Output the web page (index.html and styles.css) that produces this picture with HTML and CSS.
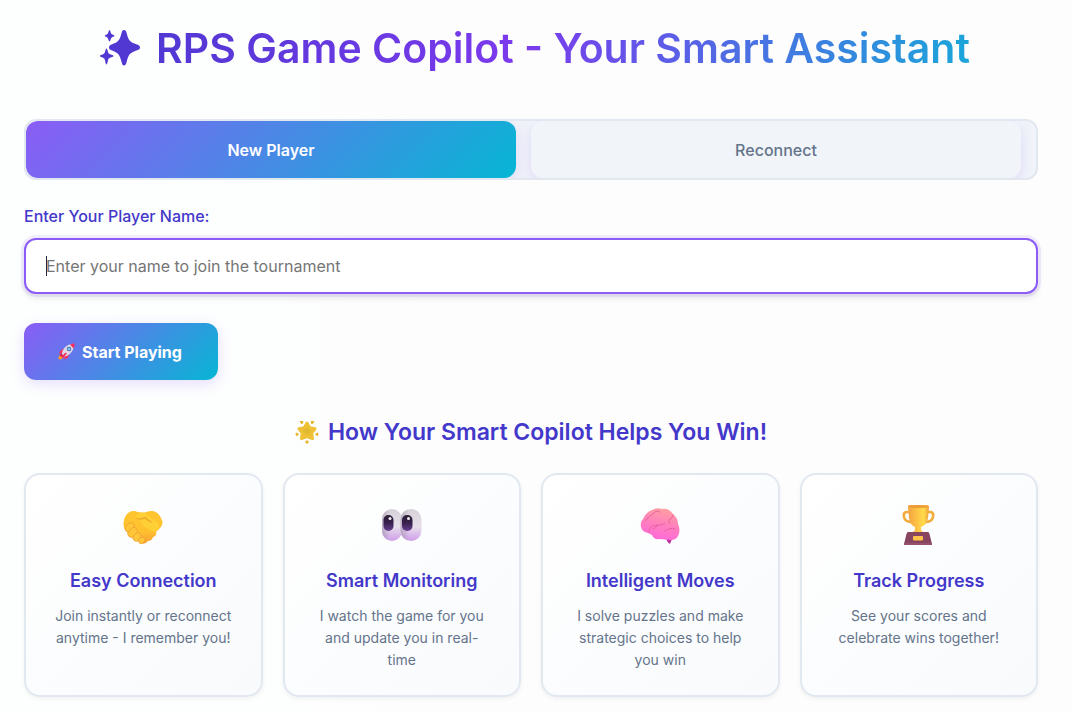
FILE: index.html
```html
<!DOCTYPE html>
<html lang="en">
<head>
<meta charset="utf-8">
<title>RPS Game Copilot</title>
<link rel="stylesheet" href="styles.css">
</head>
<body>
<main class="page">
  <h1 class="title">
    <svg class="title-icon" viewBox="0 0 50 40" aria-hidden="true">
      <g fill="#5138d3">
        <path d="M32 2C33.500 2 34 3 34.500 4.500C36.600 12.500 37.500 14 45 16.500C47 17.200 48 18 48 19.500S47 21.600 45 22.300C37.500 25 36.600 26.500 34.500 34.500C34 36.500 33.300 37.500 32 37.500S30.200 36.500 29.700 34.500C27.600 26.500 26.500 25 19.500 22.300C17.800 21.600 17 21 17 19.500S17.800 17.200 19.500 16.500C26.500 14 27.600 12.500 29.700 4.500C30.200 2.800 30.700 2 32 2Z"/>
        <path d="M17.500 2C18.400 2 18.500 5 19.500 6C20.500 7 22.500 6.800 22.500 7.800S20.500 8.800 19.500 9.700C18.500 10.700 18.400 13.500 17.500 13.500S16.500 10.700 15.500 9.700C14.500 8.700 12.800 8.700 12.800 7.800S14.500 7 15.500 6C16.500 5 16.600 2 17.500 2Z"/>
        <path d="M14.500 20.500C15.500 20.500 15.800 24.500 16.800 25.500C17.800 26.500 21.500 26.700 21.500 28S17.800 29.500 16.800 30.500C15.800 31.500 15.500 36.500 14.500 36.500S13.200 31.500 12.200 30.500C11.200 29.500 8 29.200 8 28S11.200 26.500 12.200 25.500C13.200 24.500 13.500 20.500 14.500 20.500Z"/>
      </g>
    </svg>
    <span class="title-text">RPS Game Copilot - Your Smart Assistant</span>
  </h1>

  <nav class="tabs" aria-label="Player mode">
    <button class="tab tab-active" type="button">New Player</button>
    <button class="tab" type="button">Reconnect</button>
  </nav>

  <form class="join">
    <label class="join-label" for="player">Enter Your Player Name:</label>
    <input class="join-input" id="player" type="text" placeholder="Enter your name to join the tournament" autofocus>
    <button class="start" type="submit">
      <svg class="start-icon" viewBox="0 0 34 34" aria-hidden="true">
        <path d="M9 25L2 25L1 32L5 33L10 30Z" fill="#ff9b21"/>
        <path d="M12 11L5 15L2 21L9 21ZM23 22L19 30L12 33L14 25Z" fill="#f8315f"/>
        <path d="M7 20L14 27L10 30L3 25Z" fill="#d3225b"/>
        <path d="M8 22C8 12 17 3 29 2L32 5C31 17 22 26 12 27Z" fill="#dcd8ea"/>
        <path d="M24 3Q29 0 33 1Q34 6 31 11Z" fill="#f92f60"/>
        <circle cx="22" cy="12" r="4.500" fill="#4b6ca8"/>
        <circle cx="22" cy="12" r="2.700" fill="#83cbff"/>
        <path d="M15 19L7 27L10 30L18 21Z" fill="#f8315f"/>
      </svg>
      <span>Start Playing</span>
    </button>
  </form>

  <section class="help">
    <h2 class="help-title">
      <svg class="help-icon" viewBox="0 0 24 24" aria-hidden="true">
        <defs><radialGradient id="star"><stop offset="0" stop-color="#dcb62b"/><stop offset="1" stop-color="#f5c63c"/></radialGradient></defs>
        <path d="M12 3L14.600 7.800L20 8.800L16.700 13.200L17.500 18.600L12 16.600L6.500 18.600L7.300 13.200L4 8.800L9.400 7.800Z" fill="url(#star)" stroke="#efc136" stroke-width="3" stroke-linejoin="round"/>
        <g fill="#e9b52c" stroke="#e9b52c" stroke-linejoin="round"><path d="M5 1.500L8 1.500L7 4ZM16 1.500L19 1.500L17 4ZM1 13L3.500 14L1.500 16ZM23 13L20.500 14L22.500 16ZM12 20.500L13.500 22L12 23.500L10.500 22Z"/></g>
      </svg>
      <span>How Your Smart Copilot Helps You Win!</span>
    </h2>
    <div class="cards">
      <article class="card">
        <svg class="card-icon" viewBox="0 0 40 40" aria-hidden="true">
          <defs><linearGradient id="hand" x1="0" y1="0" x2="0" y2="1"><stop offset="0" stop-color="#ffc52f"/><stop offset=".6" stop-color="#ffc22f"/><stop offset="1" stop-color="#f9a035"/></linearGradient></defs>
          <path d="M1 15C3 8 8 5 13 6.500L20 8L27 6C34 5 38 11 39.500 17C40 21 36 24 33 27Q34 31 30 32Q29 36 25 36Q21 41 17 37L12 34L5 28C0 24 0 19 1 15Z" fill="url(#hand)"/>
          <path d="M15 9Q18 6 22 8L31 15Q37 18 36 22Q34 26 31 27L20 21L18 16Q14 15 13 13Q13 10 15 9Z" fill="#ffcf36"/>
          <path d="M14 13.500Q18 15 22 12.500Q24 15 28 17" fill="none" stroke="#eda52a" stroke-width="1.300" stroke-linecap="round"/>
          <g fill="#ffc63a" stroke="#ee9c30" stroke-width=".7"><rect x="-3.500" y="-4.500" width="7" height="10" rx="3.500" transform="translate(7 22) rotate(42)"/><rect x="-3.500" y="-5" width="7" height="11" rx="3.500" transform="translate(10 27) rotate(42)"/><rect x="-3.300" y="-4.500" width="6.600" height="9" rx="3.300" transform="translate(14 32) rotate(42)"/><rect x="-2.700" y="-3" width="5.400" height="7" rx="2.700" transform="translate(19 35) rotate(42)"/></g>
        </svg>
        <h3 class="card-title">Easy Connection</h3>
        <p class="card-text">Join instantly or reconnect anytime - I remember you!</p>
      </article>
      <article class="card">
        <svg class="card-icon" viewBox="0 0 40 40" aria-hidden="true">
          <defs><linearGradient id="eye" x1="0" y1="0" x2="0" y2="1"><stop offset="0" stop-color="#d6d1d8"/><stop offset=".55" stop-color="#e7dfea"/><stop offset="1" stop-color="#cf9dea"/></linearGradient><linearGradient id="pupil" x1="0" y1="0" x2="0" y2="1"><stop offset="0" stop-color="#2c2035"/><stop offset=".5" stop-color="#37204d"/><stop offset="1" stop-color="#694091"/></linearGradient><linearGradient id="shade"><stop offset="0" stop-color="#8d7d96" stop-opacity=".5"/><stop offset=".4" stop-color="#8d7d96" stop-opacity="0"/></linearGradient></defs>
          <rect y="4" width="20" height="32" rx="10" fill="url(#eye)"/><rect y="4" width="20" height="32" rx="10" fill="url(#shade)"/>
          <rect x="18.500" y="4" width="21" height="32" rx="10.500" fill="url(#eye)"/><rect x="18.500" y="4" width="21" height="32" rx="10.500" fill="url(#shade)"/>
          <rect x="1.500" y="10" width="10" height="16" rx="5" fill="url(#pupil)"/><rect x="20" y="10" width="10.500" height="16" rx="5" fill="url(#pupil)"/>
          <circle cx="8" cy="13.500" r="1.500" fill="#eee"/><circle cx="26.500" cy="13.500" r="1.500" fill="#eee"/>
        </svg>
        <h3 class="card-title">Smart Monitoring</h3>
        <p class="card-text">I watch the game for you and update you in real-time</p>
      </article>
      <article class="card">
        <svg class="card-icon" viewBox="0 0 40 40" aria-hidden="true">
          <defs><linearGradient id="brain" x1=".65" y1="0" x2=".4" y2="1"><stop offset="0" stop-color="#ffa0a0"/><stop offset=".5" stop-color="#ff80bd"/><stop offset="1" stop-color="#ff68da"/></linearGradient></defs>
          <path d="M26 33L32 34L30 39Q29 39 27 36Z" fill="#bd3399"/>
          <path d="M8 28Q2 27 1 22Q0 17 3 14Q6 7 12 5Q17 2 22 4Q29 3 33 9Q38 13 38 19Q41 25 38 31Q36 35 31 35L19 34Q14 35 12 30Q10 29 8 28Z" fill="url(#brain)"/>
          <path d="M5 16Q9 11 14 8Q16 5 20 7M9 27Q9 22 13 21L20 20Q23 20 25 18M33 10Q33 13 29 15Q28 17 30 19M17 20Q17 23 13 24M25 26Q30 22 35 24" fill="none" stroke="#e9629f" stroke-width="1" stroke-linecap="round"/>
        </svg>
        <h3 class="card-title">Intelligent Moves</h3>
        <p class="card-text">I solve puzzles and make strategic choices to help you win</p>
      </article>
      <article class="card">
        <svg class="card-icon" viewBox="0 0 40 40" aria-hidden="true">
          <defs><linearGradient id="cup"><stop offset="0" stop-color="#f2a23f"/><stop offset=".5" stop-color="#ffc847"/><stop offset=".75" stop-color="#ffdc4c"/><stop offset="1" stop-color="#ef9d37"/></linearGradient></defs>
          <path d="M11 7H7Q4 8 5 12Q6 17 13 17M28 7H32Q35 8 34 12Q33 17 26 17" fill="none" stroke="#f2ad3d" stroke-width="2.600"/>
          <path d="M9 1Q9 0 11 0H28Q30 0 30 2L29 13Q28 20 22 22L22 25L25 28H13L16 25V22Q11 20 10 13Z" fill="url(#cup)"/>
          <ellipse cx="19.500" cy="1.500" rx="10" ry="1.500" fill="#ed9a37"/>
          <path d="M9 27H29Q30 27 30.500 29L33 39Q33 40 32 40H6Q5 40 5 39L7.500 29Q8 27 9 27Z" fill="#87455f"/>
          <path d="M5 38H33V40H5Z" fill="#96516f"/>
          <rect x="14" y="31" width="10" height="4.500" rx="1" fill="#ffc24b"/>
        </svg>
        <h3 class="card-title">Track Progress</h3>
        <p class="card-text">See your scores and celebrate wins together!</p>
      </article>
    </div>
  </section>
</main>
</body>
</html>
```
FILE: styles.css
```css
* {
  box-sizing: border-box;
}

body {
  margin: 0;
  background: linear-gradient(90deg, #fdfffe 0%, #fdfdfe 40%);
  color: #1e293b;
  font-family: Inter, "Open Sans", sans-serif;
  font-size: 16px;
}

button,
input {
  font-family: inherit;
}

h1,
h2,
h3,
p {
  margin: 0;
}

.page {
  padding: 24px 34px 14px 24px;
}

.title {
  display: flex;
  align-items: center;
  justify-content: center;
  height: 48px;
  margin-bottom: 47px;
  font-size: 41px;
  font-weight: 600;
  line-height: 48px;
  white-space: nowrap;
}

.title-icon {
  flex: none;
  width: 50px;
  height: 40px;
  margin-right: 14px;
}

.title-text {
  background: linear-gradient(100deg, #5138d3 0%, #7c3aed 45%, #1aa6d9 100%);
  background-clip: text;
  -webkit-background-clip: text;
  color: transparent;
}

.tabs {
  display: flex;
  gap: 15px;
  padding-right: 15px;
  overflow: hidden;
  border: 2px solid #e2e8f0;
  border-radius: 12px;
  background: #f1f4f9;
}

.tab {
  flex: 1;
  height: 57px;
  padding: 0;
  border: 0;
  border-radius: 12px;
  background: #f1f4f9;
  box-shadow: 0 4px 14px rgba(139, 92, 246, 0.18);
  color: #64748b;
  font-size: 16px;
  font-weight: 500;
}

.tab-active {
  background: linear-gradient(135deg, #8b5cf6, #06b6d4);
  color: #fff;
  font-weight: 600;
}

.join {
  display: flex;
  flex-direction: column;
  align-items: flex-start;
  padding-top: 24px;
}

.join-label {
  margin-bottom: 10px;
  color: #4338ca;
  font-weight: 500;
  line-height: 24px;
}

.join-input {
  width: 100%;
  height: 56px;
  margin-bottom: 29px;
  padding: 0 20px;
  border: 2px solid #8b5cf6;
  border-radius: 12px;
  outline: 0;
  background: #fff;
  box-shadow: 0 0 0 3px rgba(139, 92, 246, 0.1), 0 4px 6px rgba(0, 0, 0, 0.1);
  color: #1e293b;
  font-size: 16px;
}

.join-input::placeholder {
  color: #757575;
}

/* Steady caret while the field is empty */
.join-input:placeholder-shown {
  background: linear-gradient(#1e293b, #1e293b) 20px center / 1px 20px no-repeat #fff;
  caret-color: transparent;
}

.start {
  display: flex;
  align-items: center;
  gap: 7px;
  height: 57px;
  padding: 0 36px 0 34px;
  border: 0;
  border-radius: 12px;
  background: linear-gradient(135deg, #8b5cf6, #06b6d4);
  box-shadow: 0 4px 14px rgba(139, 92, 246, 0.2);
  color: #fff;
  font-size: 16px;
  font-weight: 700;
}

.start-icon {
  width: 17px;
  height: 17px;
}

.help {
  padding-top: 36px;
}

.help-title {
  display: flex;
  align-items: center;
  justify-content: center;
  gap: 9px;
  margin-bottom: 25px;
  color: #4338ca;
  font-size: 23px;
  font-weight: 600;
  line-height: 32px;
}

.help-icon {
  width: 24px;
  height: 24px;
}

.cards {
  display: grid;
  grid-template-columns: repeat(4, 1fr);
  gap: 20px;
}

.card {
  display: flex;
  flex-direction: column;
  align-items: center;
  padding: 30px 28px 24px;
  border: 2px solid #e2e8f0;
  border-radius: 16px;
  background: linear-gradient(135deg, #fff, #f8fafc);
  box-shadow: 0 2px 4px rgba(0, 0, 0, 0.05);
  text-align: center;
}

.card-icon {
  width: 40px;
  height: 40px;
  margin-bottom: 22px;
}

.card-title {
  margin-bottom: 10px;
  color: #4338ca;
  font-size: 18px;
  font-weight: 600;
  line-height: 28px;
  white-space: nowrap;
}

.card-text {
  color: #64748b;
  font-size: 14px;
  line-height: 22px;
}
```
